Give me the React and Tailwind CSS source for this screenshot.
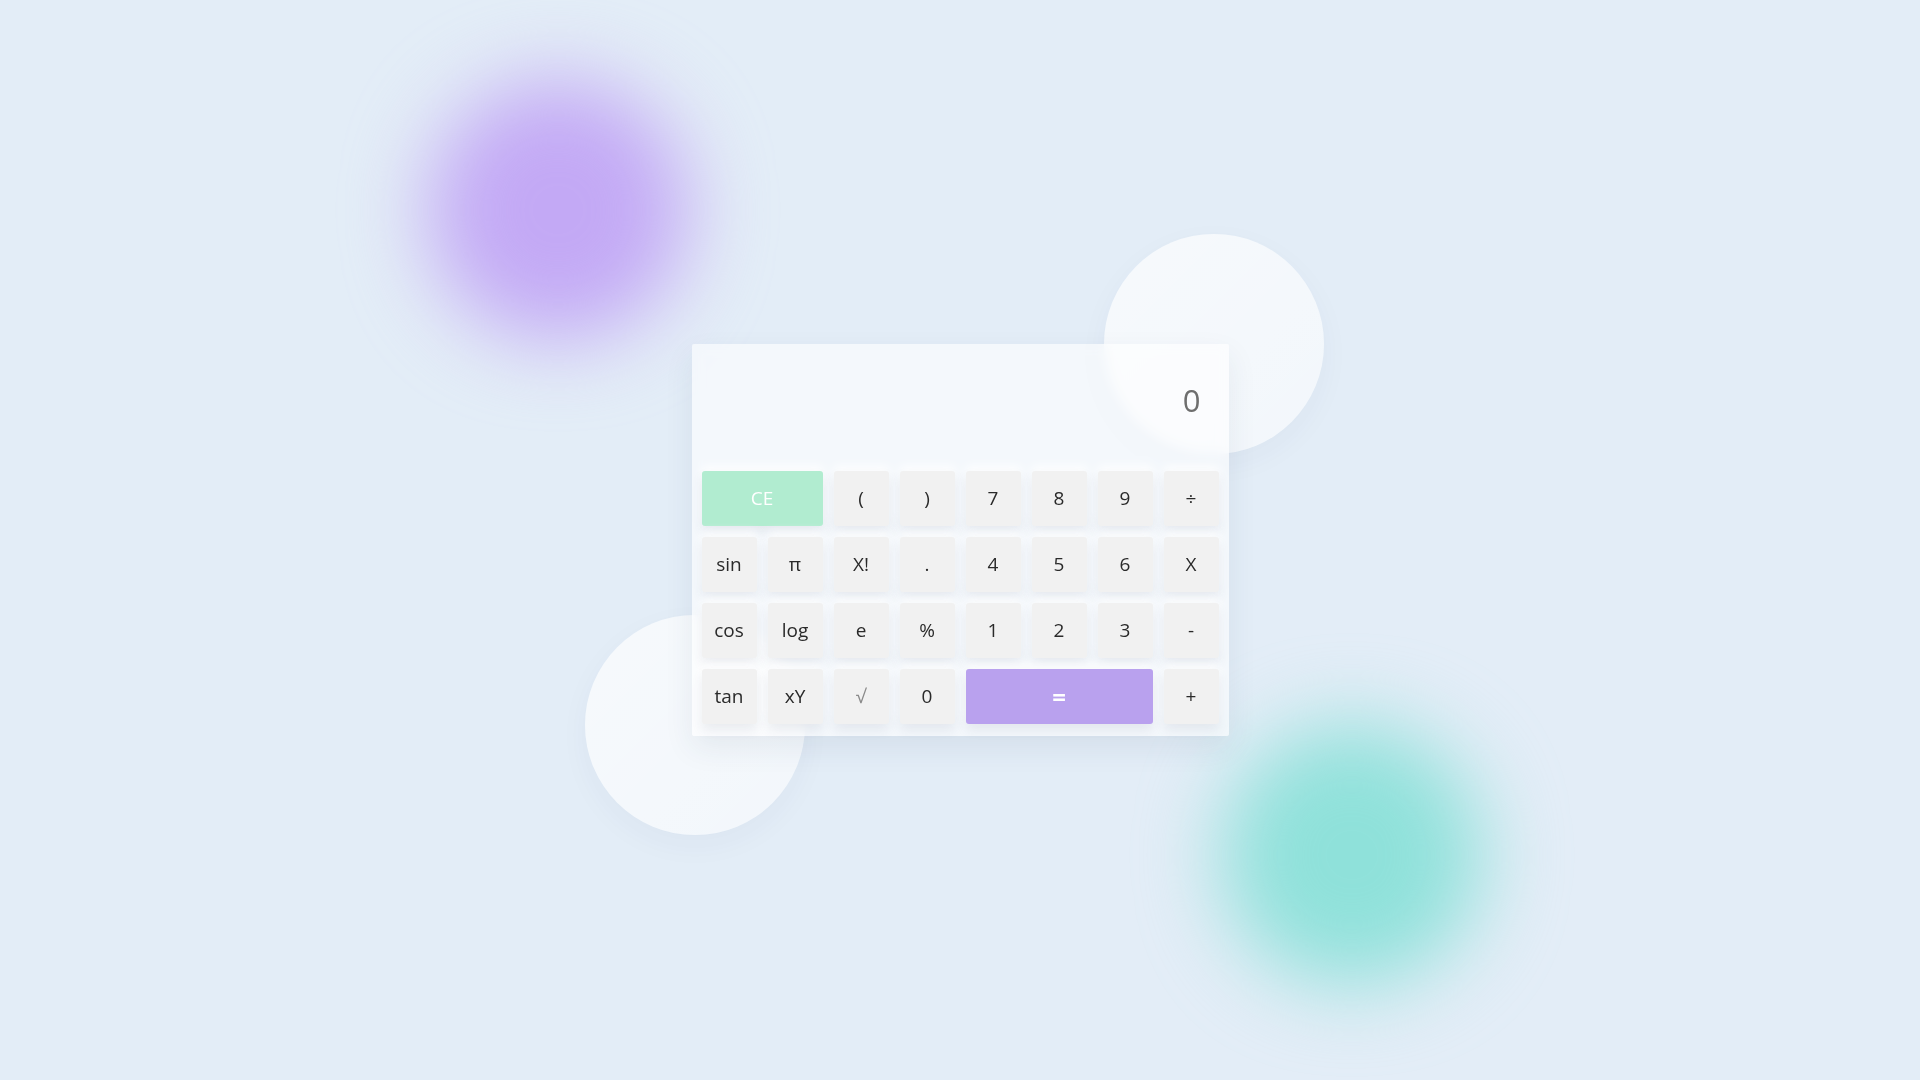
const rows = [
  [
    { label: 'CE', span: 2, kind: 'clear' },
    { label: '(' },
    { label: ')' },
    { label: '7' },
    { label: '8' },
    { label: '9' },
    { label: '÷' },
  ],
  [
    { label: 'sin' },
    { label: 'π' },
    { label: 'X!' },
    { label: '.' },
    { label: '4' },
    { label: '5' },
    { label: '6' },
    { label: 'X' },
  ],
  [
    { label: 'cos' },
    { label: 'log' },
    { label: 'e' },
    { label: '%' },
    { label: '1' },
    { label: '2' },
    { label: '3' },
    { label: '-' },
  ],
  [
    { label: 'tan' },
    { label: 'xY' },
    { label: '√', dim: true },
    { label: '0' },
    { label: '=', span: 3, kind: 'equals' },
    { label: '+' },
  ],
];

function Key({ label, kind, dim }) {
  const base =
    'flex h-[55px] items-center justify-center rounded-[3px] text-[19px] shadow-[0_6px_12px_rgba(40,60,90,0.09),0_-5px_10px_rgba(255,255,255,0.85)]';

  if (kind === 'clear') {
    return <button className={`${base} col-span-2 bg-[#b1ecd0] text-white`}>{label}</button>;
  }

  if (kind === 'equals') {
    return (
      <button className={`${base} col-span-3 bg-[#b9a1ee] text-[24px] font-bold text-white`}>{label}</button>
    );
  }

  return (
    <button className={`${base} bg-[#f1f1f1] ${dim ? 'text-[#8a8a8a]' : 'text-[#2a2a2a]'}`}>{label}</button>
  );
}

export default function App() {
  return (
    <div
      className="relative flex h-[1080px] w-full items-center justify-center overflow-hidden bg-[#e3edf7]"
      style={{ fontFamily: '"Open Sans", "Liberation Sans", sans-serif' }}
    >
      {/* blurred colour blobs */}
      <div className="absolute left-[428px] top-[80px] h-[260px] w-[260px] rounded-full bg-[#c3a9f5] blur-[40px]" />
      <div className="absolute left-[1222px] top-[725px] h-[260px] w-[260px] rounded-full bg-[#8fe1da] blur-[40px]" />

      {/* frosted circles */}
      <div className="absolute left-[1104px] top-[234px] h-[220px] w-[220px] rounded-full bg-[linear-gradient(135deg,rgba(255,255,255,0.7),rgba(255,255,255,0.55))] shadow-[0_10px_30px_rgba(40,60,90,0.04)]" />
      <div className="absolute left-[585px] top-[615px] h-[220px] w-[220px] rounded-full bg-[linear-gradient(135deg,rgba(255,255,255,0.7),rgba(255,255,255,0.55))] shadow-[0_10px_30px_rgba(40,60,90,0.04)]" />

      <div className="relative w-[537px] rounded-[2px] bg-white/60 px-[10px] pb-[12px] pt-[10px] shadow-[0_12px_30px_rgba(40,60,90,0.08)] backdrop-blur-[6px]">
        <div className="flex h-[117px] items-center justify-end pb-[24px] pr-[18px] text-[31px] text-[#6e6e6e]">0</div>

        <div className="grid grid-cols-[repeat(8,55px)] gap-[11px]">
          {rows.flat().map((key, index) => (
            <Key key={index} {...key} />
          ))}
        </div>
      </div>
    </div>
  );
}
